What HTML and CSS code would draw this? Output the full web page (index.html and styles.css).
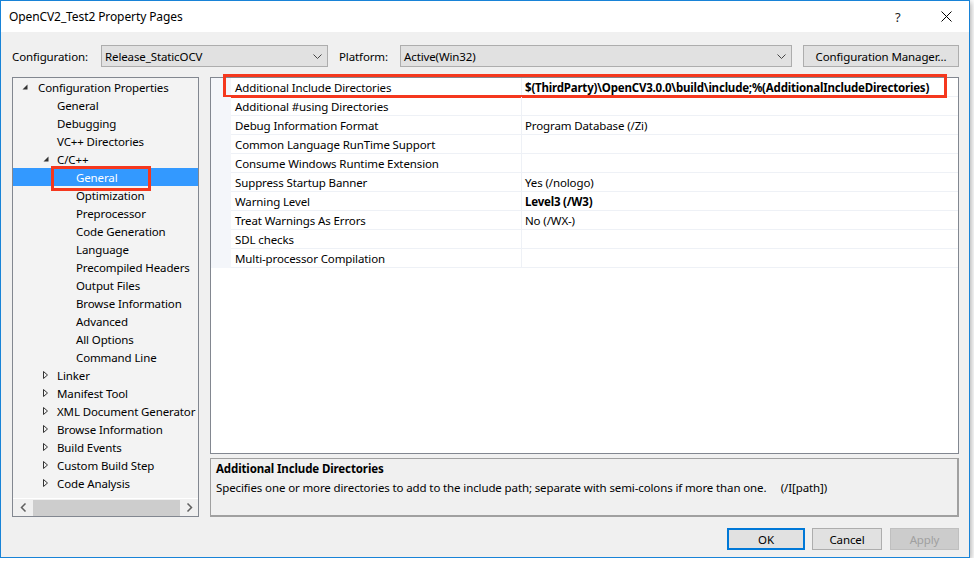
FILE: index.html
```html
<!DOCTYPE html>
<html lang="en">
<head>
  <meta charset="UTF-8" />
  <title>OpenCV2_Test2 Property Pages</title>
  <link rel="stylesheet" href="styles.css">
</head>
<body>
  <div class="window">
    <div class="titlebar">
      <span class="title">OpenCV2_Test2 Property Pages</span>
      <span class="help">?</span>
      <svg class="close" width="11" height="11" viewBox="0 0 11 11"><path d="M0.5 0.5 L10.5 10.5 M10.5 0.5 L0.5 10.5" stroke="#000" stroke-width="1" fill="none"/></svg>
    </div>

    <div class="content">
      <div class="config-row">
        <span class="lbl lbl-config">Configuration:</span>
        <div class="combo combo-config">
          <span>Release_StaticOCV</span>
          <svg class="chev" width="9" height="5" viewBox="0 0 9 5"><path d="M0.5 0.5 L4.5 4.5 L8.5 0.5" stroke="#444" fill="none"/></svg>
        </div>
        <span class="lbl lbl-platform">Platform:</span>
        <div class="combo combo-platform">
          <span>Active(Win32)</span>
          <svg class="chev" width="9" height="5" viewBox="0 0 9 5"><path d="M0.5 0.5 L4.5 4.5 L8.5 0.5" stroke="#444" fill="none"/></svg>
        </div>
        <div class="btn btn-manager">Configuration Manager...</div>
      </div>

      <div class="main">
        <div class="tree">
          <ul class="tree-list">
            <li class="node lv0"><span class="exp"><svg width="6" height="6" viewBox="0 0 6 6"><polygon points="5.5,0.5 5.5,5.5 0.5,5.5" fill="#333"/></svg></span>Configuration Properties</li>
            <li class="node leaf1">General</li>
            <li class="node leaf1">Debugging</li>
            <li class="node leaf1">VC++ Directories</li>
            <li class="node lv1"><span class="exp"><svg width="6" height="6" viewBox="0 0 6 6"><polygon points="5.5,0.5 5.5,5.5 0.5,5.5" fill="#333"/></svg></span>C/C++</li>
            <li class="node leaf2 selected">General<span class="mark mark-general"></span></li>
            <li class="node leaf2">Optimization</li>
            <li class="node leaf2">Preprocessor</li>
            <li class="node leaf2">Code Generation</li>
            <li class="node leaf2">Language</li>
            <li class="node leaf2">Precompiled Headers</li>
            <li class="node leaf2">Output Files</li>
            <li class="node leaf2">Browse Information</li>
            <li class="node leaf2">Advanced</li>
            <li class="node leaf2">All Options</li>
            <li class="node leaf2">Command Line</li>
            <li class="node lv1"><span class="exp"><svg width="5" height="8" viewBox="0 0 5 8"><polygon points="0.5,0.5 4.5,4 0.5,7.5" fill="none" stroke="#333"/></svg></span>Linker</li>
            <li class="node lv1"><span class="exp"><svg width="5" height="8" viewBox="0 0 5 8"><polygon points="0.5,0.5 4.5,4 0.5,7.5" fill="none" stroke="#333"/></svg></span>Manifest Tool</li>
            <li class="node lv1"><span class="exp"><svg width="5" height="8" viewBox="0 0 5 8"><polygon points="0.5,0.5 4.5,4 0.5,7.5" fill="none" stroke="#333"/></svg></span>XML Document Generator</li>
            <li class="node lv1"><span class="exp"><svg width="5" height="8" viewBox="0 0 5 8"><polygon points="0.5,0.5 4.5,4 0.5,7.5" fill="none" stroke="#333"/></svg></span>Browse Information</li>
            <li class="node lv1"><span class="exp"><svg width="5" height="8" viewBox="0 0 5 8"><polygon points="0.5,0.5 4.5,4 0.5,7.5" fill="none" stroke="#333"/></svg></span>Build Events</li>
            <li class="node lv1"><span class="exp"><svg width="5" height="8" viewBox="0 0 5 8"><polygon points="0.5,0.5 4.5,4 0.5,7.5" fill="none" stroke="#333"/></svg></span>Custom Build Step</li>
            <li class="node lv1"><span class="exp"><svg width="5" height="8" viewBox="0 0 5 8"><polygon points="0.5,0.5 4.5,4 0.5,7.5" fill="none" stroke="#333"/></svg></span>Code Analysis</li>
          </ul>
          <div class="hscroll">
            <svg class="arrow" width="7" height="9" viewBox="0 0 7 9"><path d="M5.5 0.5 L1.5 4.5 L5.5 8.5" stroke="#606060" stroke-width="1.5" fill="none"/></svg>
            <div class="thumb"></div>
            <svg class="arrow" width="7" height="9" viewBox="0 0 7 9"><path d="M1.5 0.5 L5.5 4.5 L1.5 8.5" stroke="#606060" stroke-width="1.5" fill="none"/></svg>
          </div>
        </div>

        <div class="right">
          <div class="grid">
            <div class="prop"><div class="gut"></div><div class="name">Additional Include Directories</div><div class="val bold">$(ThirdParty)\OpenCV3.0.0\build\include;%(AdditionalIncludeDirectories)</div><span class="mark mark-row"></span></div>
            <div class="prop"><div class="gut"></div><div class="name">Additional #using Directories</div><div class="val"></div></div>
            <div class="prop"><div class="gut"></div><div class="name">Debug Information Format</div><div class="val">Program Database (/Zi)</div></div>
            <div class="prop"><div class="gut"></div><div class="name">Common Language RunTime Support</div><div class="val"></div></div>
            <div class="prop"><div class="gut"></div><div class="name">Consume Windows Runtime Extension</div><div class="val"></div></div>
            <div class="prop"><div class="gut"></div><div class="name">Suppress Startup Banner</div><div class="val">Yes (/nologo)</div></div>
            <div class="prop"><div class="gut"></div><div class="name">Warning Level</div><div class="val bold">Level3 (/W3)</div></div>
            <div class="prop"><div class="gut"></div><div class="name">Treat Warnings As Errors</div><div class="val">No (/WX-)</div></div>
            <div class="prop"><div class="gut"></div><div class="name">SDL checks</div><div class="val"></div></div>
            <div class="prop"><div class="gut"></div><div class="name">Multi-processor Compilation</div><div class="val"></div></div>
          </div>
          <div class="desc">
            <div class="desc-title">Additional Include Directories</div>
            <div class="desc-text">Specifies one or more directories to add to the include path; separate with semi-colons if more than one.&nbsp;&nbsp;&nbsp;&nbsp;&nbsp;(/I[path])</div>
          </div>
        </div>
      </div>

      <div class="footer">
        <div class="btn btn-ok">OK</div>
        <div class="btn btn-cancel">Cancel</div>
        <div class="btn btn-apply">Apply</div>
      </div>
    </div>
  </div>
</body>
</html>
```

FILE: styles.css
```css
body { margin: 0; background: #ffffff; font-family: "Noto Sans", "Open Sans", sans-serif; font-size: 11.5px; letter-spacing: -0.12px; color: #000; }
.window { width: 968px; height: 556px; border: 1px solid #1883d7; background: #f0f0f0; box-shadow: 1px 2px 6px rgba(0,0,0,0.35); display: flex; flex-direction: column; }

.titlebar { height: 31px; background: #fff; display: flex; align-items: center; padding: 0 0 0 8px; }
.title { flex: 1; font-size: 12px; letter-spacing: -0.1px; }
.help { width: 10px; margin-right: 36px; font-size: 13px; color: #222; }
.close { margin-right: 17px; }

.content { flex: 1; padding: 13px 10px 0 11px; display: flex; flex-direction: column; }

.config-row { display: flex; align-items: center; height: 22px; }
.lbl-config { width: 89px; }
.lbl-platform { width: 61px; margin-left: 11px; }
.combo { box-sizing: border-box; height: 22px; background: #e1e1e1; border: 1px solid #adadad; display: flex; align-items: center; justify-content: space-between; padding: 0 4px 0 3px; }
.combo-config { width: 227px; }
.combo-platform { width: 392px; }
.chev { margin-right: 1px; }
.btn { box-sizing: border-box; height: 22px; background: #e1e1e1; border: 1px solid #adadad; display: flex; align-items: center; justify-content: center; }
.btn-manager { width: 156px; margin-left: 11px; }

.main { display: flex; margin-top: 10px; height: 440px; }

.tree { position: relative; box-sizing: border-box; width: 187px; height: 440px; border: 1px solid #828790; background: #f3f3f3; display: flex; flex-direction: column; }
.tree-list { list-style: none; margin: 0; padding: 0; flex: 1; overflow: hidden; }
.node { position: relative; height: 18px; display: flex; align-items: center; white-space: nowrap; }
.exp { display: flex; align-items: center; flex-shrink: 0; }
.lv0 { padding-left: 9px; }
.lv0 .exp { width: 16px; }
.lv1 { padding-left: 30px; }
.lv1 .exp { width: 14px; }
.leaf1 { padding-left: 44px; }
.leaf2 { padding-left: 63px; }
.selected { background: #3399ff; color: #fff; }

.hscroll { height: 17px; border-top: 1px solid #fff; background: #f0f0f0; display: flex; align-items: center; }
.hscroll .arrow { margin: 0 6px 0 7px; }
.hscroll .arrow:last-child { margin: 0 5px 0 6px; }
.thumb { flex: 1; height: 16px; background: #cdcdcd; }

.right { flex: 1; margin-left: 11px; display: flex; flex-direction: column; }
.grid { position: relative; box-sizing: border-box; height: 378px; border: 1px solid #828790; background: #fff; }
.prop { position: relative; display: flex; height: 19px; }
.gut { width: 20px; background: #f4f6fa; }
.name { box-sizing: border-box; width: 291px; padding-left: 4px; border-bottom: 1px solid #eef1f6; border-right: 1px solid #eef1f6; display: flex; align-items: center; white-space: nowrap; }
.val { flex: 1; padding-left: 3px; border-bottom: 1px solid #eef1f6; display: flex; align-items: center; white-space: nowrap; }
.bold { font-weight: bold; letter-spacing: -0.2px; }

.desc { box-sizing: border-box; height: 59px; margin-top: 4px; border: 1px solid #a0a0a0; border-right-width: 2px; border-bottom-width: 2px; background: #f0f0f0; padding: 1px 5px; }
.desc-title { font-weight: bold; height: 18px; line-height: 18px; }
.desc-text { height: 18px; line-height: 18px; margin-top: 1px; }

.footer { display: flex; justify-content: flex-end; margin-top: 11px; }
.btn-ok { width: 78px; border: 2px solid #0078d7; }
.btn-cancel { width: 70px; margin-left: 7px; }
.btn-apply { width: 69px; margin-left: 8px; background: #cccccc; border-color: #bfbfbf; color: #a0a0a0; }

.mark { position: absolute; border: 3px solid #f5381e; box-sizing: border-box; }
.mark-general { left: 38px; top: -2px; width: 100px; height: 25px; }
.mark-row { left: 12px; top: -4px; width: 724px; height: 24px; }
```
